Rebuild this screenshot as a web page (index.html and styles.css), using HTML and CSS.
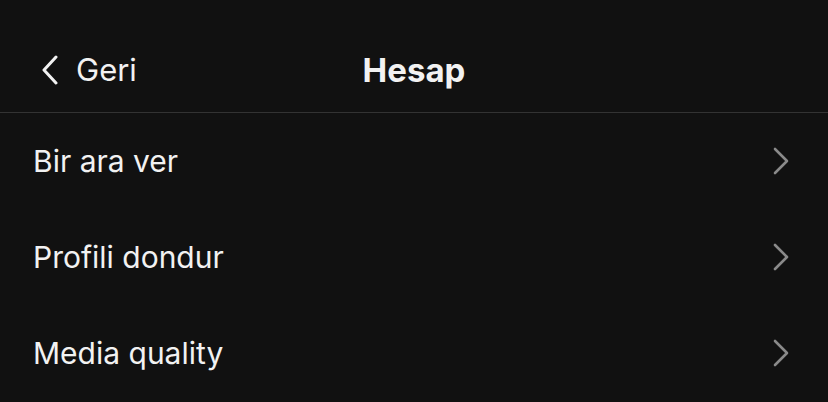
FILE: index.html
```html
<!DOCTYPE html>
<html lang="tr">
<head>
    <meta charset="UTF-8">
    <meta name="viewport" content="width=device-width, initial-scale=1.0">
    <title>Hesap</title>
    <link rel="stylesheet" href="styles.css">
</head>
<body>
    <div class="screen">
        <header class="topbar">
            <a class="back" href="#">
                <svg class="back-icon" width="20" height="30" viewBox="0 0 20 30">
                    <path d="M16 2 L4 15 L16 28" fill="none" stroke="#f2f2f2" stroke-width="3" stroke-linecap="round" stroke-linejoin="round"/>
                </svg>
                <span>Geri</span>
            </a>
            <h1 class="title">Hesap</h1>
            <div></div>
        </header>
        <ul class="menu">
            <li class="row">
                <span>Bir ara ver</span>
                <svg class="chevron" width="18" height="28" viewBox="0 0 18 28">
                    <path d="M3 2 L15 14 L3 26" fill="none" stroke="#8a8a8a" stroke-width="2.6" stroke-linecap="round" stroke-linejoin="round"/>
                </svg>
            </li>
            <li class="row">
                <span>Profili dondur</span>
                <svg class="chevron" width="18" height="28" viewBox="0 0 18 28">
                    <path d="M3 2 L15 14 L3 26" fill="none" stroke="#8a8a8a" stroke-width="2.6" stroke-linecap="round" stroke-linejoin="round"/>
                </svg>
            </li>
            <li class="row">
                <span>Media quality</span>
                <svg class="chevron" width="18" height="28" viewBox="0 0 18 28">
                    <path d="M3 2 L15 14 L3 26" fill="none" stroke="#8a8a8a" stroke-width="2.6" stroke-linecap="round" stroke-linejoin="round"/>
                </svg>
            </li>
        </ul>
    </div>
</body>
</html>
```

FILE: styles.css
```css
html, body {
    margin: 0;
    padding: 0;
    background-color: #111111;
}
body {
    font-family: Inter, "Noto Sans", sans-serif;
    color: #f2f2f2;
}
.screen {
    width: 828px;
    height: 402px;
    overflow: hidden;
}
.topbar {
    height: 113px;
    padding: 28px 40px 0 40px;
    border-bottom: 1px solid #333333;
    display: grid;
    grid-template-columns: 1fr auto 1fr;
    align-items: center;
    box-sizing: border-box;
}
.back {
    display: flex;
    align-items: center;
    gap: 16px;
    color: #f2f2f2;
    text-decoration: none;
    font-size: 31px;
    line-height: 30px;
}
.back-icon {
    display: block;
}
.title {
    margin: 0;
    font-size: 33px;
    font-weight: 700;
    line-height: 40px;
}
.menu {
    list-style: none;
    margin: 0;
    padding: 0;
}
.row {
    height: 96px;
    display: flex;
    align-items: center;
    justify-content: space-between;
    padding: 0 38px 0 33px;
    font-size: 30px;
    box-sizing: border-box;
}
.chevron {
    display: block;
}
```
